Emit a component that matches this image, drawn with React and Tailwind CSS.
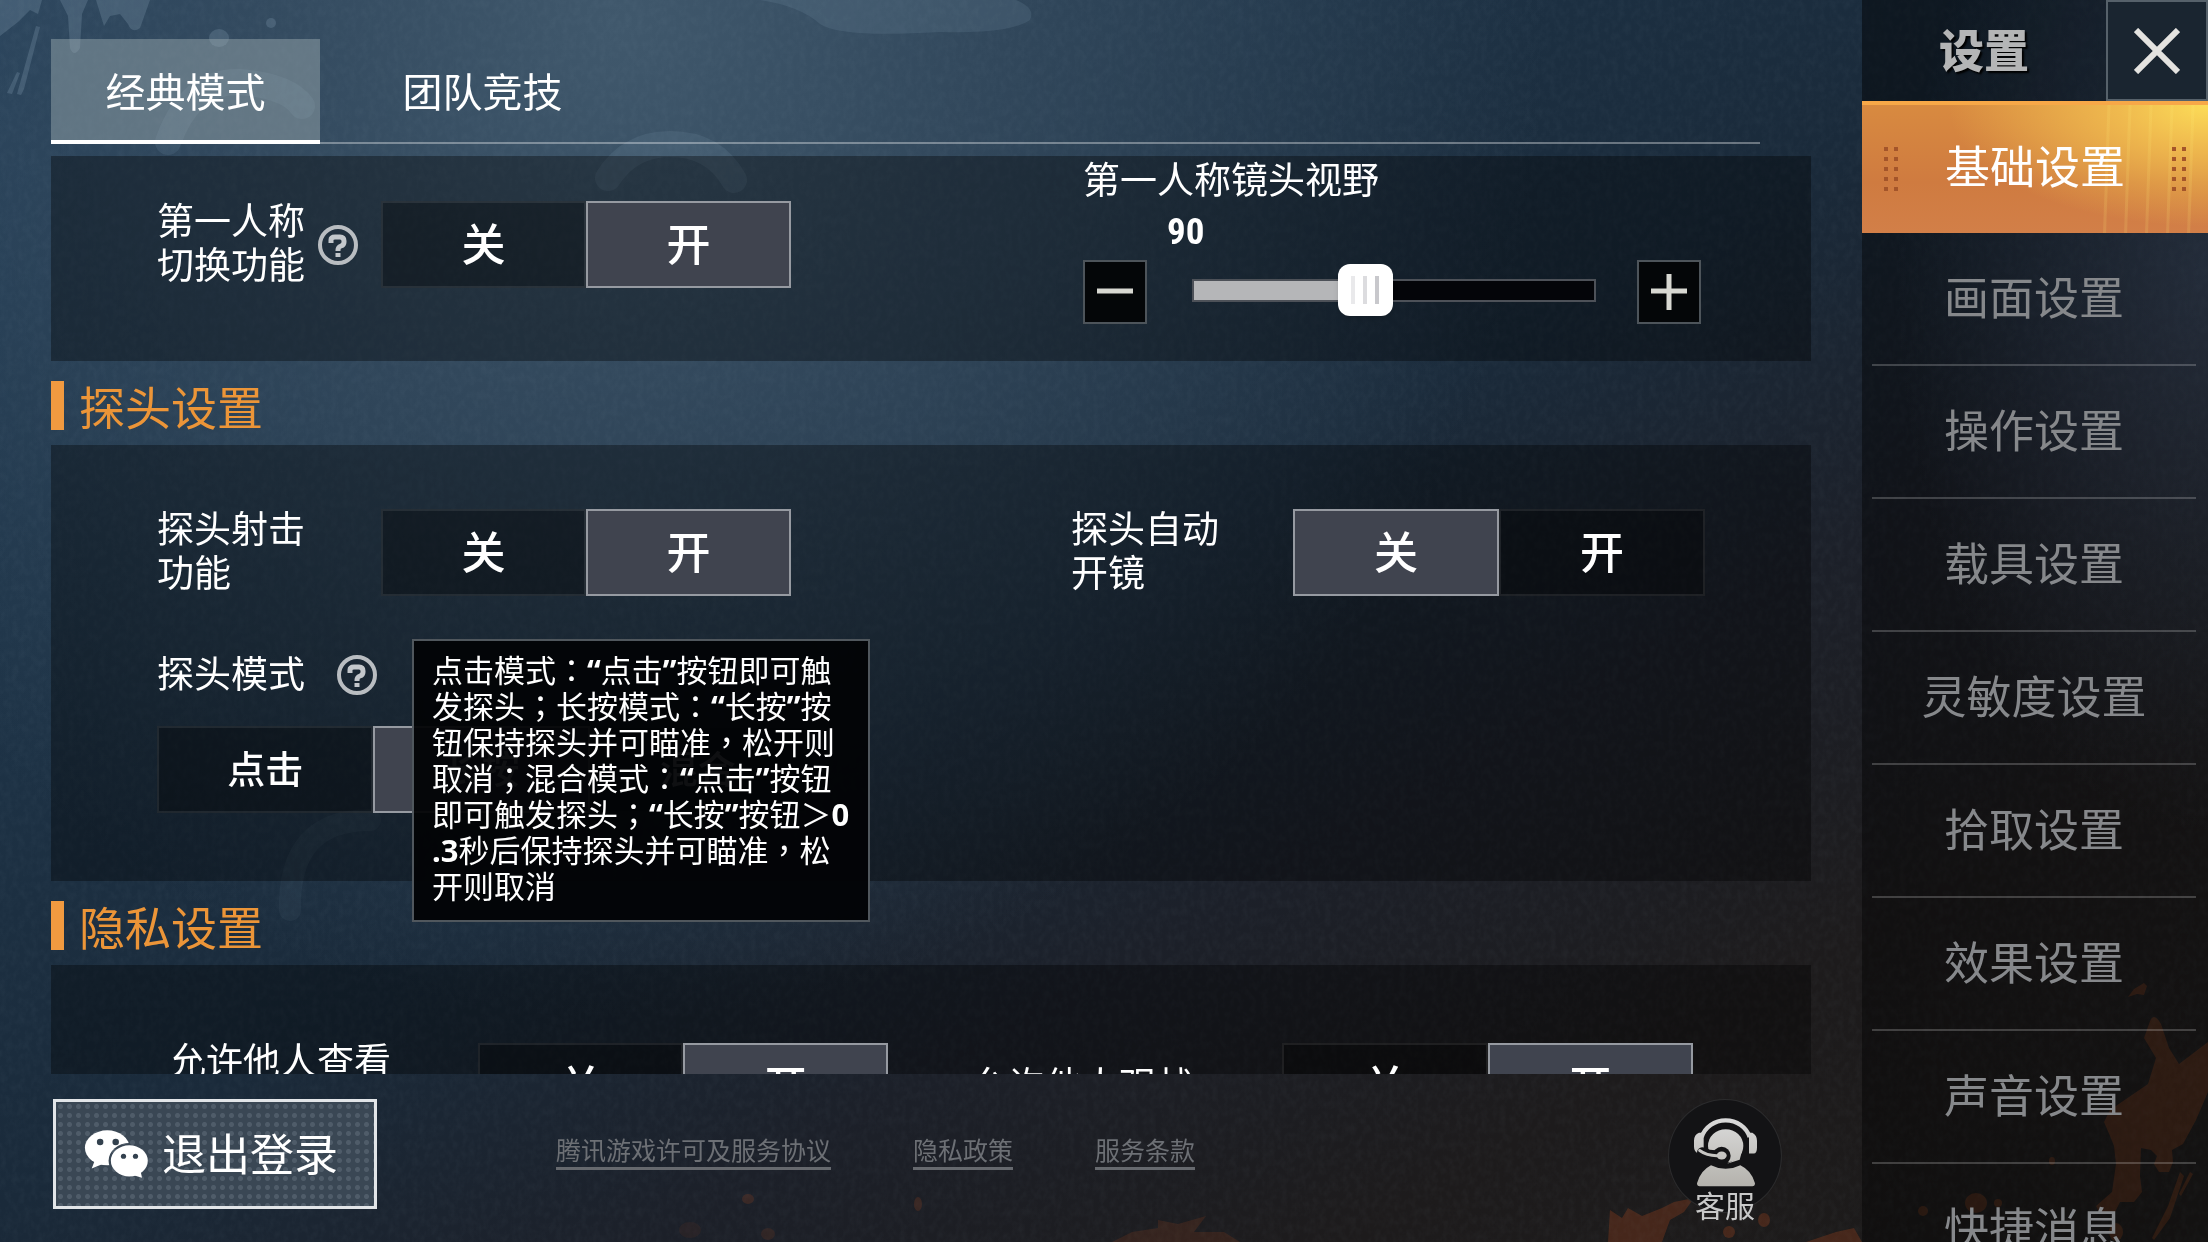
import { useState } from "react";

const MENU = [
  "基础设置",
  "画面设置",
  "操作设置",
  "载具设置",
  "灵敏度设置",
  "拾取设置",
  "效果设置",
  "声音设置",
  "快捷消息",
];

const TABS = ["经典模式", "团队竞技"];

const LINKS = ["腾讯游戏许可及服务协议", "隐私政策", "服务条款"];

const PEEK_HELP = [
  "点击模式：“点击”按钮即可触",
  "发探头；长按模式：“长按”按",
  "钮保持探头并可瞄准，松开则",
  "取消；混合模式：“点击”按钮",
  "即可触发探头；“长按”按钮＞0",
  ".3秒后保持探头并可瞄准，松",
  "开则取消",
];

const FOV_MIN = 80;
const FOV_MAX = 104;

function Backdrop() {
  return (
    <svg
      className="absolute inset-0 -z-10 h-full w-full"
      viewBox="0 0 2208 1242"
      preserveAspectRatio="none"
      aria-hidden="true">
      <filter id="grain" x="0" y="0" width="100%" height="100%">
        <feTurbulence type="fractalNoise" baseFrequency="0.16 0.12" numOctaves="3" seed="4" />
        <feColorMatrix values="0 0 0 0 0.6  0 0 0 0 0.75  0 0 0 0 0.85  0.9 0 0 0 -0.32" />
      </filter>
      <rect width="2208" height="1242" filter="url(#grain)" opacity="0.07" />

      {/* pale paint marks */}
      <g fill="#8fa9bd" opacity="0.24">
        <path d="M0 0h42l-4 14-8-4-12 12-18 14z" />
        <path d="M60 0h28l-6 14-2 34q-6 10-10 0l-2-32z" />
        <path d="M96 0h54l-10 28q-8 6-12-4l-8-10-10 2-6 10z" />
        <path d="M36 26l4 1-16 62-3 6-4-1zM17 72l3 1-8 21-5-1z" />
        <ellipse cx="219" cy="38" rx="10" ry="9" />
        <ellipse cx="271" cy="23" rx="5" ry="5" />
      </g>
      <g fill="none" stroke="#8fa9bd" strokeLinecap="round" opacity="0.13">
        <path d="M168 142q22-62 72-60 48 4 62 24" strokeWidth="26" />
        <path d="M608 178q22-34 62-34 44 0 64 36" strokeWidth="26" />
        <path d="M290 910q-2-90 80-90" strokeWidth="22" opacity="0.5" />
      </g>
      <path d="M760 0h256q20 8 14 20-20 14-90 12-100 6-120-8-20-18-60-24z" fill="#8fa9bd" opacity="0.14" />

      {/* orange paint in the lower corner */}
      <g fill="#a8491f" opacity="0.3">
        <path d="M1608 1242l2-32 12 8 6-10 14 8 20-8 12-6 20-4-10 14-14 8-8 22zM1806 1242l30-10 18-4 8 14z" />
        <path d="M1112 1242l20-10 26-4 0-8 20 4 28-8-12 16 30 0 16 10z" opacity="0.6" />
        <ellipse cx="1764" cy="1220" rx="6" ry="7" />
        <ellipse cx="1729" cy="1232" rx="6" ry="6" />
        <ellipse cx="918" cy="1204" rx="4" ry="7" opacity="0.7" />
        <ellipse cx="748" cy="1199" rx="6" ry="5" opacity="0.7" />
        <ellipse cx="768" cy="1234" rx="7" ry="6" opacity="0.5" />
        <ellipse cx="690" cy="1230" rx="11" ry="8" opacity="0.3" />
      </g>
      <g fill="#b8521f" opacity="0.24">
        <path d="M2128 997l6-8 10-6 3 3-3 9-7-1z" />
        <path d="M2149 1024q4-14 12 0l8 24 10 16 29-22v50l-12 28-13 24-11 6 1 12-4 10-10 0-5-8 3-8-6-6-10-2-1 28 2 16-8 10-14 0-5 10-15 2-4-8 16-14 4-28-2-18-4-10-6-14 6-12 38-26 8-26-12-20z" />
        <path d="M2180 1172l4 4-14 42-16 22-2-2 16-32zM2190 1172l3 2-12 22-2-2z" />
        <ellipse cx="1976" cy="1203" rx="11" ry="10" />
        <ellipse cx="1923" cy="1211" rx="5" ry="5" />
        <ellipse cx="1998" cy="1203" rx="4" ry="4" />
        <ellipse cx="2052" cy="1161" rx="3" ry="4" />
        <ellipse cx="2116" cy="1232" rx="7" ry="9" />
      </g>
    </svg>
  );
}

function WechatIcon() {
  return (
    <svg viewBox="130 118 200 148" className="h-12 w-[66px] shrink-0" aria-hidden="true">
      <mask id="front-gap">
        <rect x="120" y="100" width="220" height="180" fill="#fff" />
        <ellipse cx="268" cy="213" rx="64" ry="55" fill="#000" />
      </mask>
      <g mask="url(#front-gap)">
        <ellipse cx="200" cy="173" rx="69" ry="54" fill="#fff" />
        <path d="M163 208l-11 29 34-14z" fill="#fff" />
        <circle cx="178" cy="155" r="10" fill="#33414e" />
        <circle cx="226" cy="155" r="10" fill="#33414e" />
      </g>
      <ellipse cx="268" cy="213" rx="57" ry="48" fill="#fff" />
      <path d="M276 256l31 9-6-30z" fill="#fff" />
      <circle cx="250" cy="199" r="8" fill="#33414e" />
      <circle cx="287" cy="199" r="8" fill="#33414e" />
    </svg>
  );
}

function HeadsetIcon() {
  return (
    <svg viewBox="130 75 195 215" className="h-[72px] w-[65px] shrink-0" aria-hidden="true">
      <linearGradient id="agent" x1="0" y1="75" x2="0" y2="290" gradientUnits="userSpaceOnUse">
        <stop offset="0" stopColor="#dcdcdc" />
        <stop offset="1" stopColor="#b3b1ab" />
      </linearGradient>
      <path d="M156 138A75 70 0 0 1 300 138" fill="none" stroke="url(#agent)" strokeWidth="13" />
      <path d="M162 125v62h-14q-15-2-15-20v-18q0-18 15-24zM298 125h10q14 8 14 24v20q0 18-10 18h-14z" fill="url(#agent)" />
      <ellipse cx="228" cy="164" rx="53" ry="50" fill="url(#agent)" />
      <path d="M232 218q34-14 46-42l-8 30z" fill="url(#agent)" />
      <path d="M158 184q22 12 52 9" fill="none" stroke="#131315" strokeWidth="32" strokeLinecap="round" />
      <circle cx="216" cy="194" r="27" fill="#131315" />
      <path d="M150 178q24 18 62 15" fill="none" stroke="url(#agent)" strokeWidth="9" strokeLinecap="round" />
      <ellipse cx="216" cy="193" rx="15" ry="12" fill="url(#agent)" />
      <path d="M142 276q10-38 42-54 44 22 88 0 34 16 44 54 0 9-8 9H150q-8 0-8-9z" fill="url(#agent)" />
    </svg>
  );
}

function HelpButton({ label }) {
  return (
    <button
      type="button"
      aria-label={label}
      className="flex h-10 w-10 shrink-0 items-center justify-center rounded-full border-4 border-[#b9bdc1] text-[#c3c7cb]">
      <svg viewBox="0 0 24 28" className="h-7 w-6" fill="none" stroke="currentColor" strokeWidth="5">
        <path d="M5 12V9q0-3 4-3h5q4 0 4 4v1q0 3-3 4-3 1-3 4v1" />
        <path d="M12 22v4" />
      </svg>
    </button>
  );
}

function Segmented({ options, selected, label, small }) {
  const [value, setValue] = useState(selected);

  return (
    <div role="group" aria-label={label} className="flex h-[87px] min-w-0 flex-1 bg-black/35">
      {options.map((option) => (
        <button
          key={option}
          type="button"
          aria-pressed={value === option}
          onClick={() => setValue(option)}
          className={`flex-1 border-2 pb-1.5 font-medium text-white ${small ? "text-[38px]" : "text-[44px]"} ${
            value === option ? "border-[#969aa1] bg-[#40444f]" : "border-white/8"
          }`}>
          {option}
        </button>
      ))}
    </div>
  );
}

function SectionTitle({ children }) {
  return (
    <h2 className="flex h-[84px] items-start gap-[15px] pt-5 text-[46px] leading-[48px] text-[#ec9538]">
      <span className="h-[49px] w-[13px] bg-[#f19a40]" />
      {children}
    </h2>
  );
}

function StepButton({ plus }) {
  return (
    <button
      type="button"
      aria-label={plus ? "增加" : "减少"}
      className="flex h-16 w-16 shrink-0 items-center justify-center border-2 border-[#4d545a] bg-[#040608]">
      <svg viewBox="0 0 36 36" className="h-9 w-9" stroke="#d8d8d2" strokeWidth="5">
        <path d="M0 17h36" />
        {plus && <path d="M18 0v36" />}
      </svg>
    </button>
  );
}

function FovSlider() {
  const [fov, setFov] = useState(90);
  const percent = ((fov - FOV_MIN) / (FOV_MAX - FOV_MIN)) * 100;

  return (
    <div className="mr-1 w-[618px]">
      <label htmlFor="fov" className="block text-[37px] leading-[44px]">
        第一人称镜头视野
      </label>
      <output
        htmlFor="fov"
        className="mt-[14px] mb-[10px] block pl-[84px] font-['Liberation_Sans_Narrow','Roboto_Condensed',Roboto,sans-serif] text-[37px] leading-9 font-bold">
        {fov}
      </output>
      <div className="flex items-center">
        <StepButton />
        <input
          id="fov"
          type="range"
          min={FOV_MIN}
          max={FOV_MAX}
          value={fov}
          onChange={(e) => setFov(Number(e.target.value))}
          style={{ backgroundImage: `linear-gradient(to right, #b5b6b8 ${percent}%, #040509 ${percent}%)` }}
          className="mr-[41px] mb-1 ml-[45px] h-[23px] min-w-0 flex-1 appearance-none border-2 border-[#4d5158] [&::-webkit-slider-thumb]:h-[52px] [&::-webkit-slider-thumb]:w-[55px] [&::-webkit-slider-thumb]:appearance-none [&::-webkit-slider-thumb]:rounded-xl [&::-webkit-slider-thumb]:bg-white [&::-webkit-slider-thumb]:bg-[linear-gradient(90deg,transparent_13px,#e9e9eb_13px,#e9e9eb_17px,transparent_17px,transparent_25px,#dcdcdf_25px,#dcdcdf_29px,transparent_29px,transparent_37px,#c8c8cc_37px,#c8c8cc_41px,transparent_41px)] [&::-webkit-slider-thumb]:bg-[size:55px_28px] [&::-webkit-slider-thumb]:bg-[position:0_12px] [&::-webkit-slider-thumb]:bg-no-repeat [&::-webkit-slider-thumb]:shadow-md"
        />
        <StepButton plus />
      </div>
    </div>
  );
}

// Western glyphs are bold, stops sit in the middle of their cell
function TipLine({ text }) {
  return (
    <span className="block h-9 whitespace-nowrap">
      {text.split(/([“”.\d]+|[：；，＞])/).map((part, i) => {
        if (/^[“”.\d]+$/.test(part)) {
          return (
            <span key={i} className="font-['Noto_Sans',sans-serif] font-bold">
              {part}
            </span>
          );
        }
        if (/^[：；，＞]$/.test(part)) {
          return (
            <span key={i} className="font-['Noto_Sans_CJK_TC',sans-serif]">
              {part}
            </span>
          );
        }
        return part;
      })}
    </span>
  );
}

function GripDots() {
  return (
    <span className="grid grid-cols-2 gap-[6px]">
      {Array.from({ length: 10 }, (_, i) => (
        <span key={i} className="h-1 w-1 bg-[#a4552a]" />
      ))}
    </span>
  );
}

function Sidebar() {
  const [active, setActive] = useState("基础设置");

  return (
    <aside className="flex w-[346px] shrink-0 flex-col overflow-hidden bg-[radial-gradient(ellipse_90%_45%_at_100%_22%,rgba(70,88,115,0.32),transparent),linear-gradient(to_right,rgba(0,0,0,0.4),rgba(0,0,0,0.3))]">
      <div className="flex h-[101px] shrink-0 bg-black/10">
        <h1 className="flex flex-1 items-center justify-center pb-1 text-[45px] font-black text-[#b4b5b6] [text-shadow:2px_2px_2px_#000]">
          设置
        </h1>
        <button
          type="button"
          aria-label="关闭"
          className="flex w-[102px] items-center justify-center border-2 border-[#56616a] bg-[#1a2530]">
          <svg viewBox="0 0 46 46" className="h-[46px] w-[46px]" stroke="#e4e3e0" strokeWidth="6">
            <path d="M2 2l42 42M44 2L2 44" />
          </svg>
        </button>
      </div>
      <nav className="flex flex-col">
        {MENU.map((item) =>
          item === active ? (
            <button
              key={item}
              type="button"
              aria-current="page"
              className="flex h-[132px] shrink-0 items-center justify-between border-t-4 border-[#f7a848] bg-[repeating-linear-gradient(92deg,transparent_0_9px,rgba(255,240,120,0.14)_10px_12px,transparent_13px_21px),radial-gradient(ellipse_75%_95%_at_100%_0%,#fcdc58_0%,#efb94e_35%,transparent_100%),linear-gradient(to_bottom,#d88a40,#cf7b40_60%,#d27f48)] bg-[size:110px_100%,100%_100%,100%_100%] bg-[position:right,center,center] bg-no-repeat px-[22px] text-[45px] text-white">
              <GripDots />
              <span className="pb-2">{item}</span>
              <GripDots />
            </button>
          ) : (
            <button
              key={item}
              type="button"
              onClick={() => setActive(item)}
              className="mr-3 ml-[10px] h-[133px] shrink-0 border-b-2 border-white/20 pb-[5px] text-[45px] text-[#86888b]">
              {item}
            </button>
          )
        )}
      </nav>
    </aside>
  );
}

function App() {
  const [tab, setTab] = useState(TABS[0]);

  return (
    <div className="relative isolate flex h-screen overflow-hidden bg-[radial-gradient(ellipse_42%_80%_at_28%_2%,#40586c_0%,rgba(56,78,98,0.75)_40%,transparent_100%),linear-gradient(150deg,#24405a_0%,#1e3448_25%,#1a2a3a_48%,#1c2029_64%,#1d1b1c_80%,#1c1a19_100%)] font-['Noto_Sans_CJK_SC',sans-serif] text-white">
      <Backdrop />

      <div className="flex min-w-0 flex-1 flex-col pl-[51px]">
        <div role="tablist" className="mt-[39px] mr-[102px] mb-3 flex h-[105px] shrink-0 border-b-2 border-white/35">
          {TABS.map((name) => (
            <button
              key={name}
              type="button"
              role="tab"
              aria-selected={tab === name}
              onClick={() => setTab(name)}
              className={`-mb-[2px] w-[269px] border-b-4 px-4 text-[40px] ${
                tab === name ? "border-white bg-[#9fb0b4]/45" : "ml-7 border-transparent"
              }`}>
              {name}
            </button>
          ))}
        </div>

        <main className="mr-[51px] min-h-0 flex-1 overflow-hidden">
          <section className="flex justify-between bg-black/35 px-[106px] pb-[37px]">
            <div className="mt-[45px] flex h-[87px] w-[634px] items-center">
              <div className="flex w-[224px] shrink-0 items-center gap-[13px] text-[37px] leading-[44px]">
                <span className="w-[148px] pb-2">第一人称切换功能</span>
                <HelpButton label="第一人称切换功能说明" />
              </div>
              <Segmented label="第一人称切换功能" options={["关", "开"]} selected="开" />
            </div>
            <FovSlider />
          </section>

          <SectionTitle>探头设置</SectionTitle>
          <section className="bg-black/35 px-[106px] pt-16 pb-[68px]">
            <div className="flex h-[87px] justify-between">
              <div className="flex w-[634px] items-center">
                <div className="w-[224px] shrink-0 pb-2 text-[37px] leading-[44px]">
                  <span className="block w-[148px]">探头射击功能</span>
                </div>
                <Segmented label="探头射击功能" options={["关", "开"]} selected="开" />
              </div>
              <div className="flex w-[634px] items-center">
                <div className="w-[222px] shrink-0 pb-2 text-[37px] leading-[44px]">
                  <span className="block w-[148px]">探头自动开镜</span>
                </div>
                <Segmented label="探头自动开镜" options={["关", "开"]} selected="关" />
              </div>
            </div>

            <div className="relative mt-[57px] w-[649px]">
              <div className="flex h-11 items-center gap-8 text-[37px] leading-[44px]">
                <span className="pb-1.5">探头模式</span>
                <HelpButton label="探头模式说明" />
              </div>
              <div className="mt-[29px] flex">
                <Segmented label="探头模式" options={["点击", "长按", "混合"]} selected="长按" small />
              </div>
              <div
                role="tooltip"
                className="absolute -top-[14px] left-[255px] w-[458px] border-2 border-[#50575d] bg-[#020305]/95 px-[18px] pt-[10px] pb-[17px] text-[31px] leading-9">
                {PEEK_HELP.map((line) => (
                  <TipLine key={line} text={line} />
                ))}
              </div>
            </div>
          </section>

          <SectionTitle>隐私设置</SectionTitle>
          <section className="flex justify-between bg-black/35 px-[118px] pt-[78px] pb-[60px]">
            <div className="flex w-[719px] items-start">
              <span className="w-[309px] shrink-0 text-[37px] leading-8">允许他人查看</span>
              <Segmented label="允许他人查看" options={["关", "开"]} selected="开" />
            </div>
            <div className="flex w-[722px] items-center">
              <span className="w-[311px] shrink-0 pb-2 text-[37px] leading-8">允许他人观战</span>
              <Segmented label="允许他人观战" options={["关", "开"]} selected="开" />
            </div>
          </section>
        </main>

        <footer className="flex h-[168px] shrink-0 items-start pt-[25px] pr-20">
          <button
            type="button"
            className="ml-[2px] flex h-[110px] w-[324px] shrink-0 items-center gap-3 border-3 border-[#e2e5e8] bg-[#3a4754] bg-[radial-gradient(circle,#4f5c69_2px,transparent_3px)] bg-[size:9px_9px] pl-7 text-[44px]">
            <WechatIcon />
            <span className="pb-1">退出登录</span>
          </button>
          <div className="mt-8 ml-[179px] flex items-start gap-[82px]">
            {LINKS.map((link) => (
              <a key={link} href="#" className="border-b-3 border-[#66696e] text-[25px] leading-9 text-[#6d7075]">
                {link}
              </a>
            ))}
          </div>
          <button
            type="button"
            className="ml-auto flex h-[114px] w-[114px] flex-col items-center rounded-full border border-white/10 bg-[#131315] pt-4 text-[30px] text-[#c9c9c9]">
            <HeadsetIcon />
            <span className="leading-8">客服</span>
          </button>
        </footer>
      </div>

      <Sidebar />
    </div>
  );
}

export default App;
